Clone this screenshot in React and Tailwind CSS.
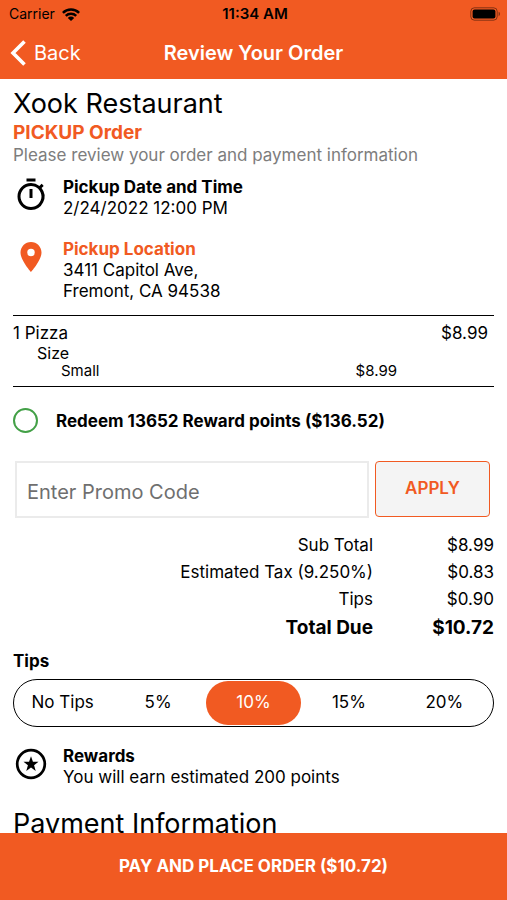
import { useState } from 'react'
import { MdOutlineTimer, MdPlace } from 'react-icons/md'

const tips = ['No Tips', '5%', '10%', '15%', '20%']

const totals = [
  ['Sub Total', '$8.99'],
  ['Estimated Tax (9.250%)', '$0.83'],
  ['Tips', '$0.90'],
]

function StatusBar() {
  return (
    <div className="grid h-7 grid-cols-[1fr_auto_1fr] items-center pl-[9px] pr-1.5 text-black">
      <div className="flex items-center gap-[7px] text-sm">
        <span>Carrier</span>
        <svg viewBox="0 0 18 13" className="h-[13px] w-[18px]" fill="none" stroke="currentColor" strokeWidth="2.5">
          <path d="M0.9 4.8a11.5 11.5 0 0 1 16.2 0" />
          <path d="M3.8 7.8a7.4 7.4 0 0 1 10.4 0" />
          <path d="M9 13 5.8 9.9a4.5 4.5 0 0 1 6.4 0z" fill="currentColor" stroke="none" />
        </svg>
      </div>
      <span className="text-[15px] font-semibold">11:34 AM</span>
      <svg viewBox="0 0 31 14" className="h-[14px] w-[31px] justify-self-end">
        <rect x="0.8" y="0.8" width="26.4" height="12.4" rx="3.6" fill="none" stroke="#000" strokeOpacity="0.45" />
        <rect x="2.6" y="2.6" width="22.8" height="8.8" rx="2" fill="#000" />
        <path d="M28.6 4.8a2.4 2.4 0 0 1 0 4.4z" fill="#000" fillOpacity="0.45" />
      </svg>
    </div>
  )
}

function InfoRow({ icon, title, accent, children }) {
  return (
    <section className="flex gap-3.5">
      {icon}
      <div className="text-[17px] leading-[21px]">
        <h3 className={accent ? 'font-bold text-[#f15a22]' : 'font-bold'}>{title}</h3>
        {children}
      </div>
    </section>
  )
}

export default function App() {
  const [tip, setTip] = useState('10%')

  return (
    <div className="flex h-screen flex-col bg-white font-['Inter',sans-serif] text-black">
      <header className="shrink-0 bg-[#f15a22] pb-0.5">
        <StatusBar />
        <div className="grid h-[49px] grid-cols-[1fr_auto_1fr] items-center px-2.5 text-xl text-white">
          <button type="button" className="flex items-center gap-2">
            <svg viewBox="0 0 16 26" className="h-[26px] w-4" fill="none" stroke="currentColor" strokeWidth="3.6">
              <path d="M14.5 1.5 3 13l11.5 11.5" />
            </svg>
            Back
          </button>
          <h1 className="font-semibold">Review Your Order</h1>
        </div>
      </header>

      <main className="min-h-0 flex-1 overflow-hidden px-[13px] pt-[11px]">
        <h2 className="text-[27px] leading-7">Xook Restaurant</h2>
        <p className="mt-1 text-[19px] leading-[22px] font-bold text-[#f15a22]">PICKUP Order</p>
        <p className="text-[17px] leading-[22px] text-[#7d7d7d]">Please review your order and payment information</p>

        <div className="mt-[11px] mb-[13px] flex flex-col gap-5">
          <InfoRow icon={<MdOutlineTimer className="size-9 shrink-0" />} title="Pickup Date and Time">
            <p>2/24/2022 12:00 PM</p>
          </InfoRow>
          <InfoRow icon={<MdPlace className="size-9 shrink-0 text-[#f15a22]" />} title="Pickup Location" accent>
            <address className="not-italic">3411 Capitol Ave,<br />Fremont, CA 94538</address>
          </InfoRow>
        </div>

        <div className="border-y border-black pt-1.5 pb-1.5 pr-1.5">
          <table className="w-full">
            <tbody>
              <tr className="text-[17px] leading-[22px]">
                <td>1 Pizza</td>
                <td></td>
                <td className="w-[91px] text-right">$8.99</td>
              </tr>
              <tr className="text-base leading-[18px]">
                <td className="pl-6">Size</td>
                <td></td>
                <td></td>
              </tr>
              <tr className="text-[15px] leading-[18px]">
                <td className="pl-12">Small</td>
                <td className="text-right">$8.99</td>
                <td></td>
              </tr>
            </tbody>
          </table>
        </div>

        <label className="mt-[21px] flex items-center gap-[18px] text-[17px] leading-6 font-bold">
          <input type="checkbox" className="size-[25px] shrink-0 appearance-none rounded-full border-2 border-[#43a047] checked:bg-[#43a047]" />
          Redeem 13652 Reward points ($136.52)
        </label>

        <form className="mt-7 flex gap-1.5 pl-0.5 pr-1" onSubmit={(e) => e.preventDefault()}>
          <input
            type="text"
            aria-label="Promo code"
            placeholder="Enter Promo Code"
            className="h-[57px] min-w-0 flex-1 border-2 border-[#ebebeb] px-2.5 pt-1 text-xl placeholder:text-[#6f6f6f]"
          />
          <button type="submit" className="h-14 w-[115px] rounded border border-[#f15a22] bg-[#f4f4f4] text-[17px] font-semibold text-[#f15a22]">APPLY</button>
        </form>

        <table className="mt-3.5 w-full text-right text-[17px] leading-[27px]">
          <tbody>
            {totals.map(([label, amount]) => (
              <tr key={label}>
                <th scope="row" className="text-right font-normal">{label}</th>
                <td className="w-[121px]">{amount}</td>
              </tr>
            ))}
            <tr className="text-[19px] leading-[30px] font-bold">
              <th scope="row" className="text-right">Total Due</th>
              <td>$10.72</td>
            </tr>
          </tbody>
        </table>

        <fieldset className="mt-[7px]">
          <legend className="text-[17px] leading-[22px] font-bold">Tips</legend>
          <div className="mt-[7px] grid h-12 grid-cols-5 rounded-full border border-black p-px text-[17px]">
            {tips.map((value) => (
              <label key={value} className="flex items-center justify-center rounded-full has-checked:bg-[#f15a22] has-checked:text-white">
                <input type="radio" name="tip" value={value} checked={tip === value} onChange={() => setTip(value)} className="sr-only" />
                {value}
              </label>
            ))}
          </div>
        </fieldset>

        <div className="mt-[19px]">
          <InfoRow
            title="Rewards"
            icon={
              <svg viewBox="0 0 24 24" className="size-9 shrink-0" fill="currentColor">
                <circle cx="12" cy="12" r="9.2" fill="none" stroke="currentColor" strokeWidth="1.8" />
                <path d="m12 6.8 1.3 3.7h3.7l-2.95 2.35 1.1 3.75L12 14.4l-3.15 2.2 1.1-3.75L7 10.5h3.7z" />
              </svg>
            }
          >
            <p>You will earn estimated 200 points</p>
          </InfoRow>
        </div>

        <h2 className="mt-[22px] text-[27px] leading-7">Payment Information</h2>
      </main>

      <button type="button" className="h-[67px] shrink-0 bg-[#f15a22] text-[17px] font-bold text-white">PAY AND PLACE ORDER ($10.72)</button>
    </div>
  )
}
